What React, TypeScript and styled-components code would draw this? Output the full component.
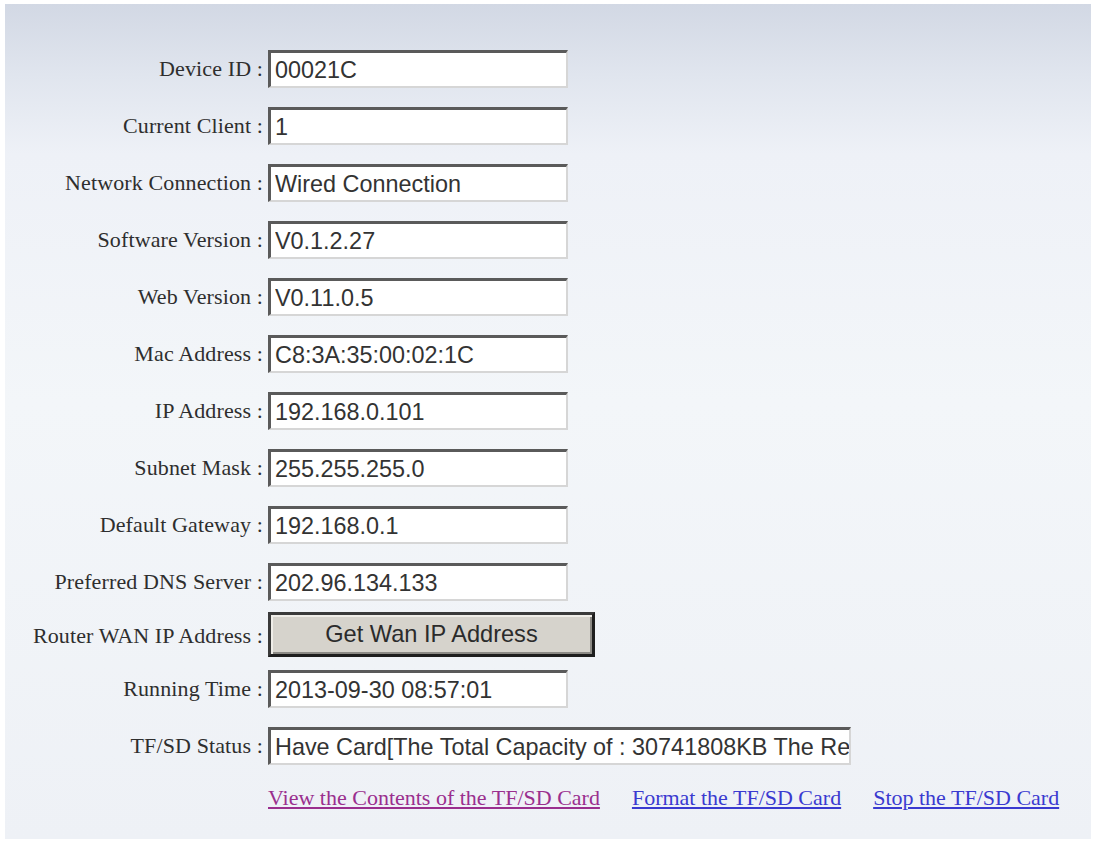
import React from "react";
import styled, { createGlobalStyle } from "styled-components";

const Global = createGlobalStyle`
  html, body { margin: 0; padding: 0; background: #ffffff; }
  body { width: 1095px; height: 842px; overflow: hidden; }
`;

const Page = styled.div`
  box-sizing: border-box;
  width: 1095px;
  height: 842px;
  padding: 4px 4px 3px 5px;
`;

const Panel = styled.div`
  box-sizing: border-box;
  height: 100%;
  background: linear-gradient(to bottom, #d2d8e4 0px, #e0e5ee 70px, #eef1f7 150px, #f3f6f9 400px, #eef1f6 100%);
  padding-top: 46px;
`;

const Form = styled.div`
  display: grid;
  grid-template-columns: 258px auto;
  column-gap: 5px;
  row-gap: 19px;
  align-items: center;
  justify-content: start;
`;

const Label = styled.div`
  font-family: "Liberation Serif", "Times New Roman", serif;
  font-size: 22px;
  color: #2e2e2e;
  text-align: right;
  white-space: nowrap;
  letter-spacing: 0.12px;
`;

const Field = styled.input<{ $w: number }>`
  box-sizing: border-box;
  width: ${(p) => p.$w}px;
  height: 38px;
  margin: 0;
  padding: 1px 0 0 4px;
  background: #ffffff;
  border-style: solid;
  border-width: 3px 2px 2px 3px;
  border-color: #5a5a5a #d6d6d6 #d6d6d6 #5a5a5a;
  font-family: "Liberation Sans", Arial, sans-serif;
  font-size: 23.4px;
  color: #333333;
  outline: none;
`;

const WanButton = styled.button`
  box-sizing: border-box;
  width: 327px;
  height: 45px;
  margin: -8px 0 -6px;
  background: #d6d3cc;
  border: 3px solid #1e1e1e;
  border-top-color: #3a3a3a;
  border-left-color: #3a3a3a;
  box-shadow: inset 2px 2px 0 #efede8, inset -2px -2px 0 #8c8a85;
  font-family: "Liberation Sans", Arial, sans-serif;
  font-size: 23.6px;
  color: #2b2b2b;
  padding: 0;
`;

const Links = styled.div`
  display: flex;
  gap: 32px;
  margin-top: 1px;
`;

const Link = styled.a<{ $visited?: boolean }>`
  font-family: "Liberation Serif", "Times New Roman", serif;
  font-size: 22px;
  color: ${(p) => (p.$visited ? "#9a2f8e" : "#3a3ad0")};
  text-decoration: underline;
  white-space: nowrap;
  cursor: pointer;
`;

const rows: [string, string][] = [
  ["Device ID :", "00021C"],
  ["Current Client :", "1"],
  ["Network Connection :", "Wired Connection"],
  ["Software Version :", "V0.1.2.27"],
  ["Web Version :", "V0.11.0.5"],
  ["Mac Address :", "C8:3A:35:00:02:1C"],
  ["IP Address :", "192.168.0.101"],
  ["Subnet Mask :", "255.255.255.0"],
  ["Default Gateway :", "192.168.0.1"],
  ["Preferred DNS Server :", "202.96.134.133"],
];

export default function App() {
  return (
    <>
      <Global />
      <Page>
        <Panel>
          <Form>
            {rows.map(([l, v]) => (
              <React.Fragment key={l}>
                <Label>{l}</Label>
                <div>
                  <Field $w={300} readOnly value={v} />
                </div>
              </React.Fragment>
            ))}
            <Label>Router WAN IP Address :</Label>
            <div>
              <WanButton>Get Wan IP Address</WanButton>
            </div>
            <Label>Running Time :</Label>
            <div>
              <Field $w={300} readOnly value="2013-09-30 08:57:01" />
            </div>
            <Label>TF/SD Status :</Label>
            <div>
              <Field
                $w={583}
                readOnly
                value="Have Card[The Total Capacity of : 30741808KB The Remaining Capacity of : 30724096KB]"
              />
            </div>
            <div />
            <Links>
              <Link $visited>View the Contents of the TF/SD Card</Link>
              <Link>Format the TF/SD Card</Link>
              <Link>Stop the TF/SD Card</Link>
            </Links>
          </Form>
        </Panel>
      </Page>
    </>
  );
}
